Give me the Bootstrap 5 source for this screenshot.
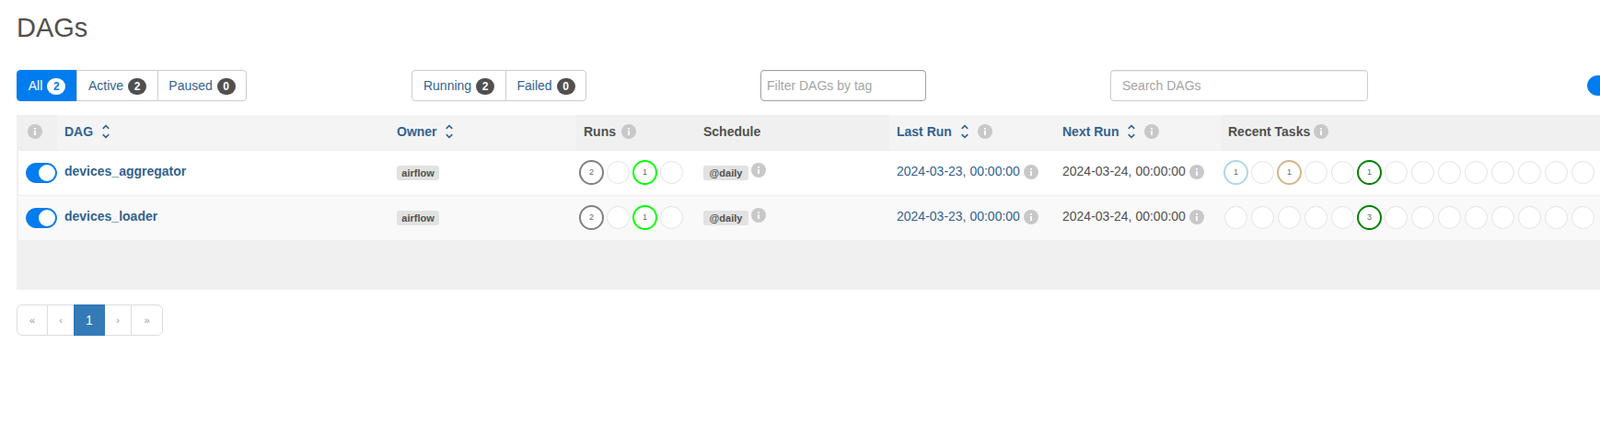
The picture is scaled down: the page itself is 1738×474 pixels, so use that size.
<!DOCTYPE html>
<html lang="en">
<head>
  <meta charset="UTF-8" />
  <title>DAGs - Airflow</title>
  <link href="https://cdn.jsdelivr.net/npm/bootstrap@5.3.0/dist/css/bootstrap.min.css" rel="stylesheet"/>
  <style>
    :root {
      --af-text: #51504f;
      --af-link: #33628f;
      --af-blue: #017cee;
    }
    html, body { overflow: hidden; background: #fff; }
    body {
      font-family: "Liberation Sans", Arial, sans-serif;
      font-size: 14px;
      color: var(--af-text);
    }
    .dags-page { padding: 0 0 0 18px; height: 474px; overflow: hidden; }
    .dags-title { font-family: "Liberation Sans", Arial, sans-serif; font-size: 29px; font-weight: 400; line-height: 33px; margin: 0; padding-top: 14px; height: 76px; color: var(--af-text); }

    .dags-controls { display: grid; grid-template-columns: 429px 379px 380px 518px 34px; height: 34px; margin-bottom: 15px; }
    .dags-controls .btn-group { justify-self: start; align-self: start; }
    .btn-group > .af-btn { font-size: 14px; line-height: 20px; padding: 6px 0; color: var(--af-link); background: #fff; border: 1px solid #ccc; border-radius: 4px; white-space: nowrap; flex: 0 0 auto; }
    .btn-group > .af-btn.btn-on { background: var(--af-blue); border-color: var(--af-blue); color: #fff; }
    .btn-group > .w-all { width: 66px; }
    .btn-group > .w-active { width: 89px; }
    .btn-group > .w-paused { width: 97px; }
    .btn-group > .w-running { width: 103px; }
    .btn-group > .w-failed { width: 88px; }
    .af-count { display: inline-block; min-width: 20px; height: 18px; line-height: 18px; border-radius: 10px; background: var(--af-text); color: #fff; font-size: 12px; font-weight: 700; text-align: center; margin-left: 1px; }
    .btn-on .af-count { background: #fff; color: var(--af-blue); }
    .af-input { height: 34px; font-size: 14px; border-radius: 4px; box-shadow: inset 0 1px 1px rgba(0,0,0,.075); color: var(--af-text); }
    .af-input::placeholder { color: #a5a5a5; }
    .af-tag { width: 180px; border: 1px solid #a0a0a0; padding: 0 6px; }
    .af-search { width: 280px; border: 1px solid #ccc; padding: 0 12px; }

    .af-switch { padding: 0; margin: 0; min-height: 0; display: flex; align-items: center; }
    .af-switch .af-toggle.form-check-input { flex: 0 0 34px; width: 34px; height: 22px; margin: 0; float: none; background-color: var(--af-blue); border-color: var(--af-blue); background-size: 24px 24px; background-position: right -2px center; }
    .dags-controls .af-switch { height: 34px; }

    .dags-wrap { width: 1900px; height: 190px; background: #f0f0f0; border-left: 2px solid #f0f0f0; }
    .dags-table { table-layout: fixed; width: 1878px; margin: 0; border-collapse: collapse; color: var(--af-text); }
    .dags-table th, .dags-table td { padding: 0 8px; vertical-align: middle; box-shadow: none; }
    .dags-table thead th { height: 38px; font-size: 14px; font-weight: 700; background: #f4f4f4; border: 0; white-space: nowrap; border-bottom: 1px solid #eee; color: var(--af-text); }
    .dags-table thead th.head-plain { background: #f0f0f0; }
    .dags-table thead th.c-toggle { padding-left: 10px; }
    .dags-table tbody td { height: 49px; border: 0; border-bottom: 1px solid #eee; background: #fff; white-space: nowrap; }
    .dags-table tbody tr:nth-child(2) td { background: #f9f9f9; }

    .c-toggle { width: 42px; }
    .c-dag { width: 361px; }
    .c-owner { width: 203px; }
    .c-runs { width: 130px; }
    .c-schedule { width: 210px; }
    .c-last { width: 180px; }
    .c-next { width: 180px; }

    .dags-table thead th.af-sorted { color: var(--af-link); }
    .af-name { color: var(--af-link); font-weight: 700; font-size: 14px; position: relative; top: -1px; }
    .af-date { color: var(--af-link); position: relative; top: -1px; }
    .af-date-plain { position: relative; top: -1px; }
    .af-label { display: inline-block; background: #e2e2e2; color: var(--af-text); font-weight: 700; font-size: 11px; line-height: 16px; height: 16px; border-radius: 3px; text-align: center; }
    .af-label.wide { width: 49px; position: relative; top: -1px; }
    .af-label.owner { width: 46px; }

    .af-info { width: 16px; height: 16px; vertical-align: -3px; }
    .af-info.up { vertical-align: 0; margin-left: -1px; }
    .af-info.gap { margin-left: 2px; }
    .af-sort { width: 20px; height: 20px; vertical-align: -5px; fill: currentColor; }

    .pad-states { padding-left: 2px !important; }
    .af-states { display: flex; }
    .af-slot { flex: 0 0 29px; width: 29px; height: 29px; display: flex; align-items: center; justify-content: center; }
    .af-dot { width: 25px; height: 25px; border-radius: 50%; border: 1px solid #e3e3e3; background: #fff; font-size: 9px; color: #666; display: flex; align-items: center; justify-content: center; line-height: 1; }
    .af-dot.on { width: 27px; height: 27px; border-width: 2px; }
    .st-grey { border-color: #808080; }
    .st-lime { border-color: #00ff00; }
    .st-green { border-color: #008000; }
    .st-blue { border-color: #add8e6; }
    .st-tan { border-color: #d2b48c; }

    .af-pager { margin: 16px 0 0; --bs-pagination-border-color: #ddd; }
    .af-pager .page-link { height: 34px; padding: 0; line-height: 32px; text-align: center; font-size: 11px; color: #999; width: 30px; }
    .af-pager .page-item:first-child .page-link { width: 34px; }
    .af-pager .page-item:last-child .page-link { width: 35px; }
    .af-pager .page-item.active .page-link { width: 34px; background: #337ab7; border-color: #337ab7; color: #fff; font-size: 14px; }
  </style>
</head>
<body>
  <svg class="d-none">
    <symbol id="i-info" viewBox="0 0 16 16">
      <circle cx="8" cy="8" r="8" fill="#c8c8c8"/>
      <rect x="7.1" y="7" width="1.8" height="5" fill="#fff"/>
      <rect x="7.1" y="4" width="1.8" height="1.8" fill="#fff"/>
    </symbol>
    <symbol id="i-sort" viewBox="0 0 24 24">
      <path d="M12 5.83L15.17 9l1.41-1.41L12 3 7.41 7.59 8.83 9 12 5.83zm0 12.34L8.83 15l-1.41 1.41L12 21l4.59-4.59L15.17 15 12 18.17z"/>
    </symbol>
  </svg>

  <div class="dags-page">
    <h2 class="dags-title">DAGs</h2>

    <div class="dags-controls">
      <div class="btn-group">
        <a class="btn af-btn btn-on w-all">All <span class="af-count">2</span></a>
        <a class="btn af-btn w-active">Active <span class="af-count">2</span></a>
        <a class="btn af-btn w-paused">Paused <span class="af-count">0</span></a>
      </div>
      <div class="btn-group">
        <a class="btn af-btn w-running">Running <span class="af-count">2</span></a>
        <a class="btn af-btn w-failed">Failed <span class="af-count">0</span></a>
      </div>
      <div><input class="af-input af-tag" type="text" placeholder="Filter DAGs by tag"/></div>
      <div><input class="af-input af-search" type="text" placeholder="Search DAGs"/></div>
      <div class="form-check form-switch af-switch"><input class="form-check-input af-toggle" type="checkbox" checked/></div>
    </div>

    <div class="dags-wrap">
      <table class="table dags-table">
        <thead>
          <tr>
            <th class="c-toggle head-plain"><svg class="af-info"><use href="#i-info"/></svg></th>
            <th class="c-dag af-sorted">DAG <svg class="af-sort"><use href="#i-sort"/></svg></th>
            <th class="c-owner af-sorted">Owner <svg class="af-sort"><use href="#i-sort"/></svg></th>
            <th class="c-runs head-plain">Runs <svg class="af-info gap"><use href="#i-info"/></svg></th>
            <th class="c-schedule head-plain">Schedule</th>
            <th class="c-last af-sorted">Last Run <svg class="af-sort"><use href="#i-sort"/></svg> <svg class="af-info"><use href="#i-info"/></svg></th>
            <th class="c-next af-sorted">Next Run <svg class="af-sort"><use href="#i-sort"/></svg> <svg class="af-info"><use href="#i-info"/></svg></th>
            <th class="head-plain">Recent Tasks <svg class="af-info"><use href="#i-info"/></svg></th>
          </tr>
        </thead>
        <tbody id="dagRows"></tbody>
      </table>
    </div>

    <ul class="pagination af-pager">
      <li class="page-item"><a class="page-link">«</a></li>
      <li class="page-item"><a class="page-link">‹</a></li>
      <li class="page-item active"><a class="page-link">1</a></li>
      <li class="page-item"><a class="page-link">›</a></li>
      <li class="page-item"><a class="page-link">»</a></li>
    </ul>
  </div>

  <script src="https://cdn.jsdelivr.net/npm/bootstrap@5.3.0/dist/js/bootstrap.bundle.min.js"></script>
  <script>
    const dags = [
      {
        name: "devices_aggregator",
        runs: [["st-grey", 2], null, ["st-lime", 1], null],
        tasks: { 0: ["st-blue", 1], 2: ["st-tan", 1], 5: ["st-green", 1] }
      },
      {
        name: "devices_loader",
        runs: [["st-grey", 2], null, ["st-lime", 1], null],
        tasks: { 5: ["st-green", 3] }
      }
    ];

    function dot(state) {
      if (!state) return '<span class="af-slot"><span class="af-dot"></span></span>';
      return `<span class="af-slot"><span class="af-dot on ${state[0]}">${state[1]}</span></span>`;
    }

    const info = '<svg class="af-info"><use href="#i-info"/></svg>';

    document.getElementById("dagRows").innerHTML = dags.map(function (dag) {
      let tasks = "";
      for (let i = 0; i < 14; i++) tasks += dot(dag.tasks[i]);
      return `<tr>
        <td><div class="form-check form-switch af-switch"><input class="form-check-input af-toggle" type="checkbox" checked/></div></td>
        <td><span class="af-name">${dag.name}</span></td>
        <td><span class="af-label owner">airflow</span></td>
        <td class="pad-states"><div class="af-states">${dag.runs.map(dot).join("")}</div></td>
        <td><span class="af-label wide">@daily</span> <svg class="af-info up"><use href="#i-info"/></svg></td>
        <td><span class="af-date">2024-03-23, 00:00:00</span> ${info}</td>
        <td><span class="af-date-plain">2024-03-24, 00:00:00</span> ${info}</td>
        <td class="pad-states"><div class="af-states">${tasks}</div></td>
      </tr>`;
    }).join("");
  </script>
</body>
</html>
